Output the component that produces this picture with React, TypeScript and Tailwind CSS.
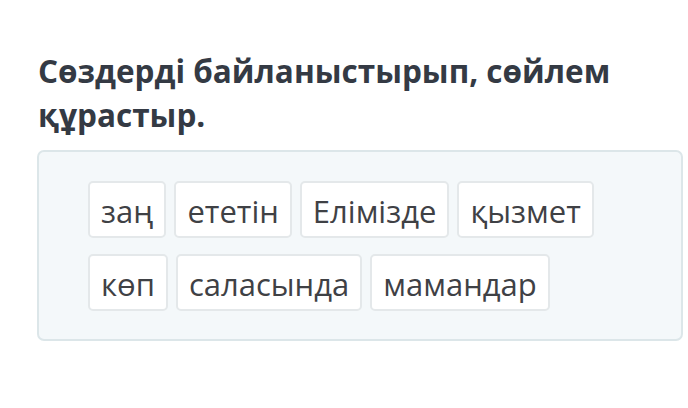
import React from 'react';

const rows = [
  ['заң', 'ететін', 'Елімізде', 'қызмет'],
  ['көп', 'саласында', 'мамандар'],
];

export default function App() {
  return (
    <main className="w-[688px] h-[408px] bg-white pl-[37px] pr-[5px] pt-[49px] font-['Open_Sans',sans-serif]">
      <h1 className="text-[31.5px] leading-[44px] font-bold text-[#343a44] pl-[1px]">
        Сөздерді байланыстырып, сөйлем құрастыр.
      </h1>
      <div className="mt-[13px] h-[191px] rounded-[7px] border-2 border-[#dce6e9] bg-[#f4f8fa] pl-[49px] pt-[29px] flex flex-col gap-4">
        {rows.map((row, i) => (
          <div key={i} className="flex gap-2">
            {row.map((w) => (
              <div
                key={w}
                className="h-[57px] px-[11px] pt-[4px] flex items-center rounded-[5px] border-2 border-[#e4e8ea] bg-white text-[31px] text-[#3f4145]"
              >
                {w}
              </div>
            ))}
          </div>
        ))}
      </div>
    </main>
  );
}
